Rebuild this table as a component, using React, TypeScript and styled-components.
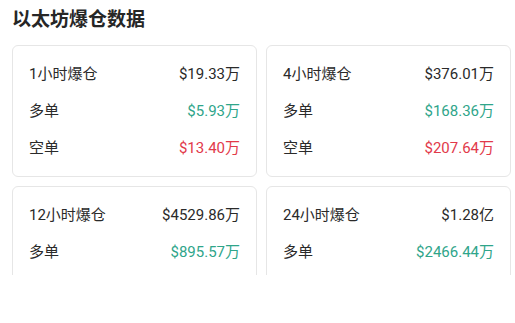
import React from "react";
import styled, { createGlobalStyle } from "styled-components";

const Global = createGlobalStyle`
  html, body { margin: 0; padding: 0; background: #fff; }
  body { font-family: "Noto Sans", "Noto Sans CJK SC", sans-serif; }
`;

const Page = styled.div`
  height: 275px;
  overflow: hidden;
  padding: 0 4px 0 12px;
  box-sizing: border-box;
  width: 515px;
`;

const Title = styled.h2`
  margin: 0;
  padding-top: 6px;
  height: 45px;
  box-sizing: border-box;
  font-family: "Noto Sans CJK SC", sans-serif;
  font-size: 19px;
  line-height: 24px;
  font-weight: 700;
  color: #262626;
`;

const Grid = styled.div`
  display: grid;
  grid-template-columns: 245px 245px;
  column-gap: 9px;
  row-gap: 9px;
  align-items: start;
`;

const Card = styled.div`
  border: 1px solid #e6e6e6;
  border-radius: 6px;
  padding: 17px 16px;
  display: flex;
  flex-direction: column;
  gap: 15px;
`;

const Row = styled.div`
  display: flex;
  justify-content: space-between;
  align-items: center;
  height: 22px;
  font-size: 15px;
  line-height: 22px;
`;

const Label = styled.span`
  color: #2a2a2a;
  font-family: "Roboto", "Noto Sans CJK SC", sans-serif;
`;

const Value = styled.span<{ $tone?: "up" | "down" }>`
  font-family: "Roboto", "Noto Sans CJK SC", sans-serif;
  color: ${(p) => (p.$tone === "up" ? "#2fa58a" : p.$tone === "down" ? "#e2394a" : "#2a2a2a")};
`;

type Item = { label: string; total: string; long: string; short?: string };

const data: Item[] = [
  { label: "1小时爆仓", total: "$19.33万", long: "$5.93万", short: "$13.40万" },
  { label: "4小时爆仓", total: "$376.01万", long: "$168.36万", short: "$207.64万" },
  { label: "12小时爆仓", total: "$4529.86万", long: "$895.57万" },
  { label: "24小时爆仓", total: "$1.28亿", long: "$2466.44万" },
];

export default function App() {
  return (
    <Page>
      <Global />
      <Title>以太坊爆仓数据</Title>
      <Grid>
        {data.map((d) => (
          <Card key={d.label}>
            <Row>
              <Label>{d.label}</Label>
              <Value>{d.total}</Value>
            </Row>
            <Row>
              <Label>多单</Label>
              <Value $tone="up">{d.long}</Value>
            </Row>
            {d.short && (
              <Row>
                <Label>空单</Label>
                <Value $tone="down">{d.short}</Value>
              </Row>
            )}
          </Card>
        ))}
      </Grid>
    </Page>
  );
}
